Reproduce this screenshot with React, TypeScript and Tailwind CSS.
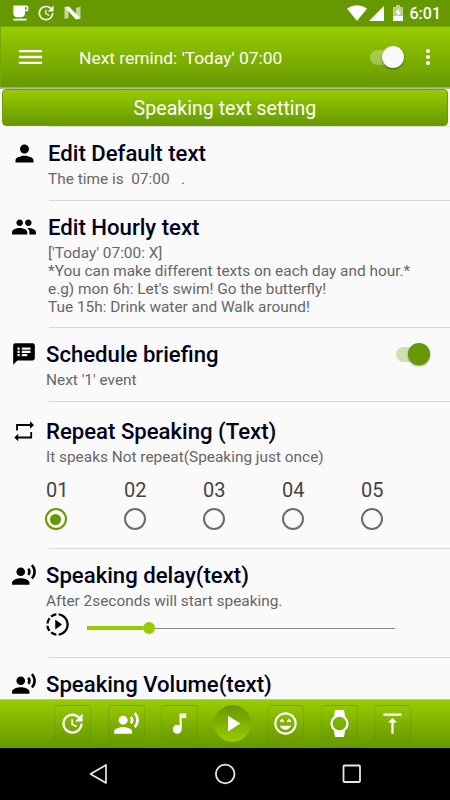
import type { ReactNode } from "react";
import {
  MdMenu, MdMoreVert, MdPerson, MdPeople, MdSpeakerNotes, MdRecordVoiceOver, MdUpdate,
  MdMusicNote, MdPlayArrow, MdWatch, MdVerticalAlignTop, MdSlowMotionVideo, MdFreeBreakfast,
} from "react-icons/md";

type Icon = (props: { className?: string }) => ReactNode;

const RepeatIcon: Icon = ({ className }) => (
  <svg className={className} viewBox="0 0 24 24">
    <path d="M5 10.500V5H19M19.200 12v5.500H5" fill="none" stroke="currentColor" strokeWidth="1.800" />
    <path d="M18 1.200L22 5l-4 3.800zM6.200 13.800L2.300 17.500l3.900 3.800z" fill="currentColor" />
  </svg>
);

const LaughIcon: Icon = ({ className }) => (
  <svg className={className} viewBox="0 0 24 24" fill="currentColor">
    <path d="M11.99 2C6.47 2 2 6.47 2 12s4.47 10 9.99 10S22 17.530 22 12 17.520 2 11.990 2zm0 18c-4.420 0-8-3.580-8-8s3.580-8 8-8 8 3.580 8 8-3.580 8-8 8zm1-10.060L14.060 11l1.060-1.060L16.180 11l1.060-1.060-2.120-2.120zm-4.120 0L9.940 11 11 9.940 8.880 7.820 6.760 9.940 7.820 11zM12 17.500c2.330 0 4.310-1.460 5.110-3.500H6.890c.8 2.040 2.780 3.500 5.110 3.500z" />
  </svg>
);

function StatusBar() {
  return (
    <div className="flex h-[26px] shrink-0 items-center bg-[#669900] pl-[10px] pr-[9px] text-white">
      <MdFreeBreakfast className="size-[20px]" />
      <MdUpdate className="ml-[6px] size-5" />
      <svg className="ml-[8px] h-[14px] w-[17px]" viewBox="0 0 17 14">
        <path d="M0.5 1L4.5 3v9L0.5 13zM12 2l4.5-1.5v12L12 11z" fill="#fff" opacity=".6" />
        <path d="M0.500 1L5 0.500 16.500 12.500 12 13.500z" fill="#fff" />
      </svg>
      <svg className="ml-auto h-4 w-5" viewBox="0 0 20 16">
        <path d="M10 16L0 3.500Q10-3.200 20 3.500z" fill="#fff" />
      </svg>
      <svg className="ml-[2px] size-[15px]" viewBox="0 0 15 15"><path d="M15 0v15H0z" fill="#fff" /></svg>
      <svg className="ml-[9px] h-4 w-[10px]" viewBox="0 0 10 16">
        <path d="M0 2h3V0h4v2h3v9H0z" fill="#fff" opacity=".55" />
        <path d="M0 11h10v5H0z" fill="#fff" />
        <path d="M6 3L2.500 8H4.500v3L8 6.800H6z" fill="#fff" />
      </svg>
      <span className="ml-[7px] pt-[2px] text-[16px] font-medium leading-6">6:01</span>
    </div>
  );
}

function Header() {
  return (
    <div className="flex h-[61px] shrink-0 items-center border-l border-t border-[#76a800] bg-linear-to-b from-[#99cc00] to-[#669900] pl-[14px] text-white">
      <MdMenu className="mb-px h-[28px] w-[31px] shrink-0" preserveAspectRatio="none" viewBox="0 0 24 24" />
      <span className="ml-[33px] pt-px text-[17.400px] leading-6">Next remind: 'Today' 07:00</span>
      <Switch track="bg-white/30" thumb="bg-[#fafafa]" className="ml-auto mr-3" />
      <MdMoreVert className="mr-[10px] h-[24px] w-[24px]" />
    </div>
  );
}

function Switch({ track, thumb, className }: { track: string; thumb: string; className: string }) {
  return (
    <span className={`flex h-[15px] w-[34px] shrink-0 items-center justify-end rounded-full ${track} ${className}`}>
      <span className={`size-[22px] shrink-0 rounded-full shadow-[0_1px_2px_rgba(0,0,0,0.45)] ${thumb}`} />
    </span>
  );
}

interface RowProps {
  icon: Icon;
  title: string;
  wide?: boolean;
  padding: string;
  height: string;
  iconClass?: string;
  trailing?: ReactNode;
  children?: ReactNode;
}

function Row({ icon: RowIcon, title, wide = false, padding, height, iconClass = "size-[26px]", trailing, children }: RowProps) {
  return (
    <section className={`flex shrink-0 flex-col ${height}`}>
      <div className={`flex min-h-0 flex-1 flex-col ${padding}`}>
        <div className="flex h-[26px] shrink-0 items-center">
          <span className={`flex shrink-0 items-center pl-px ${wide ? "w-12" : "w-[46px]"}`}>
            <span className="flex w-[46px] shrink-0 justify-center text-black">
              <RowIcon className={`shrink-0 ${iconClass}`} />
            </span>
          </span>
          <h2 className="mb-[2px] text-[22.150px] font-medium leading-[26px] text-[#00001a]">{title}</h2>
          {trailing}
        </div>
        <div className={`text-[15.400px] leading-[17.850px] text-[#666] ${wide ? "pl-12" : "pl-[46px]"}`}>{children}</div>
      </div>
      <div className="ml-[49px] h-px bg-[#d6d6d6]" />
    </section>
  );
}

function Repeats() {
  return (
    <div className="mt-[11px] flex text-[20px] leading-6 text-[#444]">
      {["01", "02", "03", "04", "05"].map((n, i) => (
        <div key={n} className={`flex shrink-0 flex-col ${i === 0 ? "w-[78px]" : "w-[79px]"}`}>
          <span>{n}</span>
          <span className={`mt-[6.500px] flex size-[22px] items-center justify-center rounded-full border-2 ${i === 0 ? "-ml-[1.500px] border-[#669900]" : "-ml-[0.400px] border-[#6c6c6c]"}`}>
            {i === 0 && <span className="size-[11px] rounded-full bg-[#669900]" />}
          </span>
        </div>
      ))}
    </div>
  );
}

function Delay() {
  return (
    <div className="flex items-center">
      <MdSlowMotionVideo className="-ml-[2px] size-[27px] text-black" />
      <div className="ml-[16px] mt-[8px] flex h-3 w-[308px] items-center">
        <span className="h-1 w-[56px] bg-[#99cc00]" />
        <span className="size-3 rounded-full bg-[#99cc00]" />
        <span className="h-px flex-1 bg-[#8a8a8a]" />
      </div>
    </div>
  );
}

const tools: Icon[] = [MdUpdate, MdRecordVoiceOver, MdMusicNote, MdPlayArrow, LaughIcon, MdWatch, MdVerticalAlignTop];

function Toolbar() {
  return (
    <div className="flex h-[49px] shrink-0 items-center gap-[16.250px] border-t border-[#b4cc84] bg-linear-to-b from-[#99cc00] to-[#669900] pb-[2px] pl-[54.300px] text-white">
      {tools.map((Tool, i) => (
        <span
          key={i}
          className={`flex size-[37px] shrink-0 items-center justify-center ${
            i === 3
              ? "rounded-full bg-linear-to-b from-[#669900] to-[#99cc00]"
              : "rounded-[4px] border border-[#5c8a00]/35 bg-linear-to-b from-[#99cc00]/30 to-[#669900]/40"
          }`}
        >
          <Tool className="size-[27px] shrink-0" />
        </span>
      ))}
    </div>
  );
}

function NavBar() {
  return (
    <div className="flex h-[52px] shrink-0 items-center justify-between bg-black pl-[89px] pr-[88px]">
      <svg className="size-5" viewBox="0 0 20 20"><path d="M17 1v18L1.500 10z" fill="none" stroke="#e8e8e8" strokeWidth="1.700" strokeLinejoin="round" /></svg>
      <svg className="size-[22px]" viewBox="0 0 22 22"><circle cx="10.200" cy="11" r="9.300" fill="none" stroke="#e8e8e8" strokeWidth="1.800" /></svg>
      <svg className="size-5" viewBox="0 0 20 20"><rect x="1.500" y="1.500" width="16.500" height="16.500" rx="1" fill="none" stroke="#e8e8e8" strokeWidth="1.800" /></svg>
    </div>
  );
}

export default function App() {
  return (
    <div className="flex h-[800px] w-[450px] flex-col overflow-hidden bg-[#fafafa] font-['Roboto',sans-serif]">
      <StatusBar />
      <Header />
      <div className="h-[2px] shrink-0 bg-linear-to-b from-[#8c9c80] to-[#c0c0c0]" />
      <div className="mx-[2px] flex h-[37px] shrink-0 items-center justify-center rounded-[4px] border border-[#6c9c08] bg-linear-to-b from-[#99cc00] to-[#669900] pt-[2px] text-[19.600px] text-white">
        Speaking text setting
      </div>
      <main className="flex min-h-0 flex-1 flex-col overflow-hidden">
        <div className="-mb-px ml-[49px] h-px shrink-0 bg-[#dcdcdc]" />
        <Row icon={MdPerson} title="Edit Default text" height="h-[75px]" padding="pt-[15px]" wide iconClass="mb-[2px] size-[27px]">
          <p className="mt-[4px] whitespace-pre">{"The time is  07:00   ."}</p>
        </Row>
        <Row icon={MdPeople} title="Edit Hourly text" height="h-[127px]" padding="pt-[14px]" wide iconClass="mb-[2px] size-[26px]">
          <p className="mt-[4px] whitespace-pre-line">{"['Today' 07:00: X]\n*You can make different texts on each day and hour.*\ne.g) mon 6h: Let's swim! Go the butterfly!\nTue 15h: Drink water and Walk around!"}</p>
        </Row>
        <Row icon={MdSpeakerNotes} title="Schedule briefing" height="h-[74px]" padding="pt-[14px]" iconClass="mb-[2px] size-[26px]"
          trailing={<Switch track="bg-[#cfdfb0]" thumb="bg-[#669900]" className="mb-[2px] ml-auto mr-5" />}>
          <p className="mt-[4px]">Next '1' event</p>
        </Row>
        <Row icon={RepeatIcon} title="Repeat Speaking (Text)" height="h-[147px]" padding="pt-[17px]" iconClass="size-[24px]">
          <p className="mt-[4px]">It speaks Not repeat(Speaking just once)</p>
          <Repeats />
        </Row>
        <Row icon={MdRecordVoiceOver} title="Speaking delay(text)" height="h-[109px]" padding="pt-[14px]" iconClass="mb-[2px] size-[26px]">
          <p className="mt-[4px]">After 2seconds will start speaking.</p>
          <Delay />
        </Row>
        <Row icon={MdRecordVoiceOver} title="Speaking Volume(text)" height="h-[74px]" padding="pt-[14px]" iconClass="mb-[2px] size-[26px]" />
      </main>
      <Toolbar />
      <NavBar />
    </div>
  );
}
